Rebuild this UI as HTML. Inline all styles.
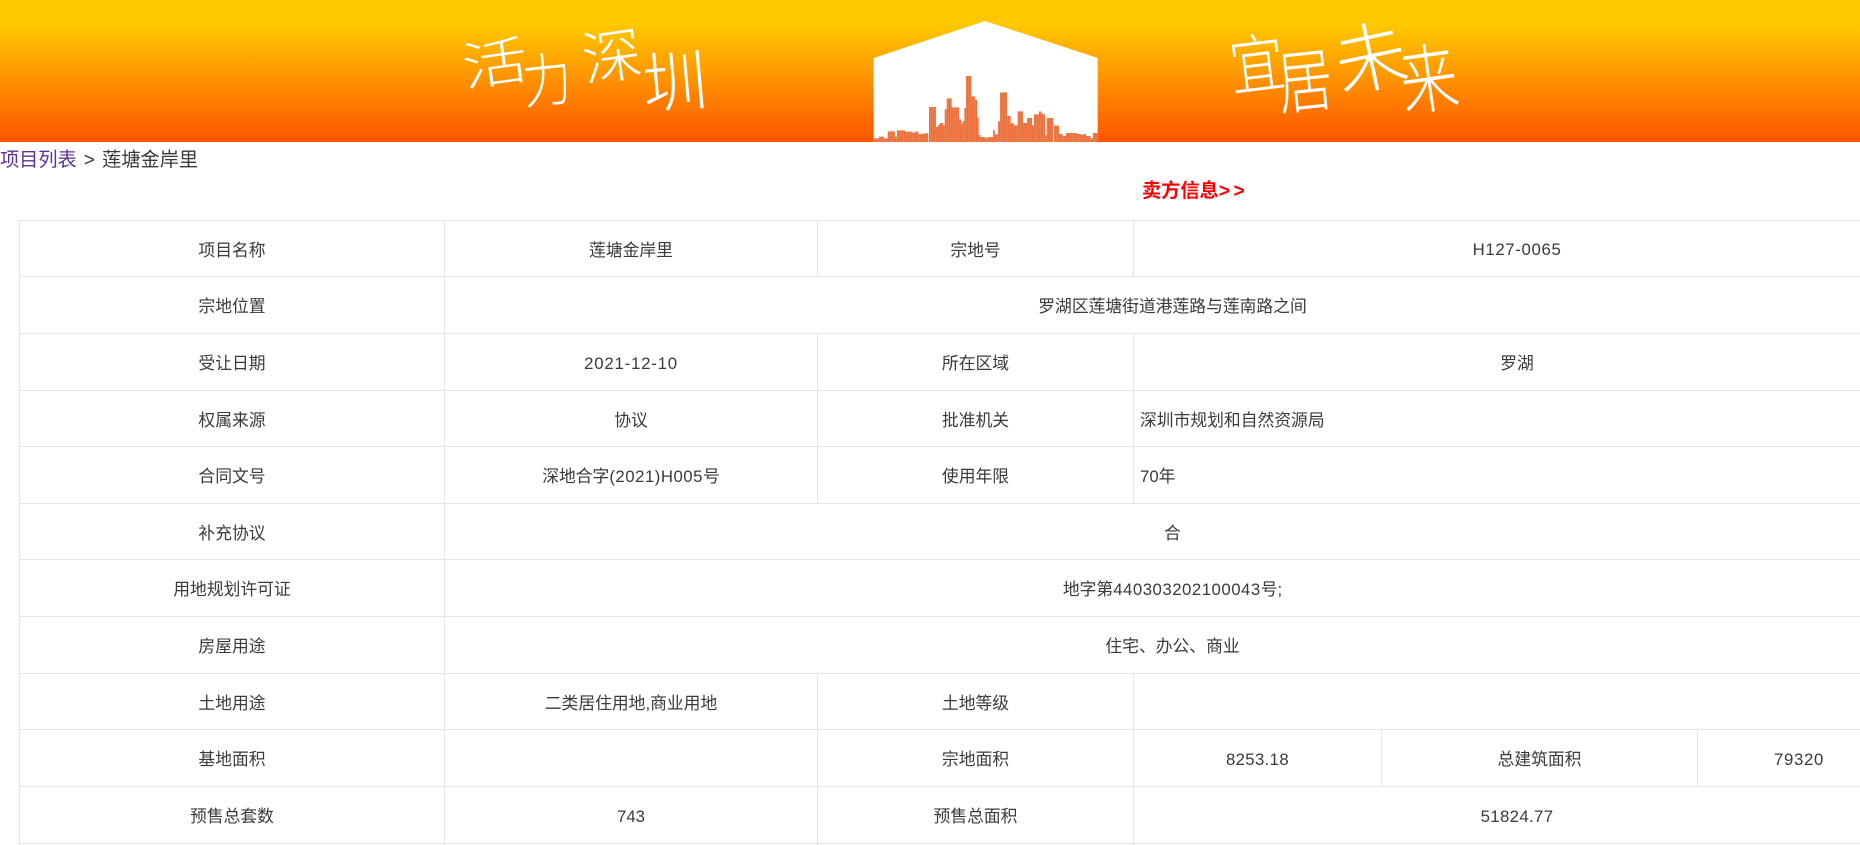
<!DOCTYPE html>
<html lang="zh-CN">
<head>
<meta charset="utf-8">
<title>莲塘金岸里</title>
<style>
html,body{margin:0;padding:0;background:#fff;width:1860px;height:845px;overflow:hidden}
body{position:relative;font-family:"Liberation Sans","Noto Sans CJK SC",sans-serif;color:#3a3a3a}
.banner{position:absolute;left:0;top:0;width:1860px;height:142px;background:linear-gradient(#ffc800 0,#ffc800 17%,#ff5500 100%)}
.banner svg{display:block}
.crumb{position:absolute;left:0;top:147px;font-size:19.2px;line-height:27px;white-space:nowrap;color:#3a3a3a}
.crumb a{color:#5f2f9a;text-decoration:none}
.crumb i{font-style:normal;margin:0 2px 0 1.5px}
.sell{position:absolute;left:1142px;top:178px;font-size:19.2px;line-height:28px;font-weight:bold;color:#f00;white-space:nowrap}
.sell span{letter-spacing:3.5px}
.wrap{position:absolute;left:19px;top:220px;width:1841px;height:625px;overflow:hidden}
table{width:1881px;table-layout:fixed;border-collapse:separate;border-spacing:0;font-size:16.8px}
td{box-sizing:border-box;border-top:1px solid #e5e5e5;border-left:1px solid #e5e5e5;text-align:center;vertical-align:middle;padding:0;overflow:hidden;white-space:nowrap}
td.l{text-align:left;padding-left:6px}
td.n{padding-top:3px}
tr.end td{height:2px;line-height:0;font-size:0}
.s8{letter-spacing:.8px}.s7{letter-spacing:.65px}.s3{letter-spacing:.35px}.s5{letter-spacing:.5px}
</style>
</head>
<body>
<div class="banner">
<svg width="1860" height="142" viewBox="0 0 1860 142" xmlns="http://www.w3.org/2000/svg">
<defs>
<pattern id="st" width="5.4" height="10" patternUnits="userSpaceOnUse"><rect width="5.4" height="10" fill="#ef8252"/><rect width="1.8" height="10" fill="#e9602a"/></pattern>
</defs>
<g fill="#fff" font-family="'Noto Sans CJK SC',sans-serif" font-size="60" font-weight="300" text-anchor="middle">
<text transform="translate(495 64) rotate(-8) scale(1.1 .87)" y="21">活</text>
<text transform="translate(547 81) rotate(-6) scale(.82 .97)" y="21">力</text>
<text transform="translate(612 57) rotate(-8) scale(1 .98)" y="21">深</text>
<text transform="translate(675 83) rotate(-5) scale(1.08 1.12)" y="21">圳</text>
<text transform="translate(1257 65) rotate(-7) scale(.92 1.07)" y="21">宜</text>
<text transform="translate(1305 82) rotate(-6) scale(.92 1.16)" y="21">居</text>
<text transform="translate(1371 59) rotate(-12) scale(1.2 1.25)" y="21">未</text>
<text transform="translate(1429 80) rotate(-8) scale(.96 1.25)" y="21">来</text>
</g>
<svg x="850" y="0" width="280" height="142" viewBox="0 0 840 426">
<path d="M71 174L405 63L743 174V426H71Z" fill="#fff"/>
<path fill="url(#st)" d="M72 426V415H87V410H102V415H113V394H135V410H141V391H165V395H188V398H195V395H205V402H220V400H235V426H237V321H258V381H264V375H269V369H279V376H284V328H290V295H305V322H327V358H333V370H338V363H343V324H348V228H364V289H375V300H381V352H386V405H391V411H407V415H413V411H429V390H434V403H444V364H450V277H471V348H482V370H492V376H503V334H519V369H531V354H546V376H552V343H567V334H573V340H579V344H585V406H590V354H610V426H612V377H627V402H638V408H648V399H680V402H695V405H700V402H708V408H722V415H729V399H743V426Z"/>
</svg>
</svg>
</div>
<div class="crumb"><a>项目列表</a> <i>&gt;</i> 莲塘金岸里</div>
<div class="sell">卖方信息<span>&gt;&gt;</span></div>
<div class="wrap">
<table>
<colgroup><col style="width:425px"><col style="width:373px"><col style="width:316px"><col style="width:248px"><col style="width:316px"><col style="width:203px"></colgroup>
<tr style="height:56px"><td>项目名称</td><td>莲塘金岸里</td><td>宗地号</td><td colspan="3" class="n s7">H127-0065</td></tr>
<tr style="height:57px"><td>宗地位置</td><td colspan="5">罗湖区莲塘街道港莲路与莲南路之间</td></tr>
<tr style="height:57px"><td>受让日期</td><td class="n s8">2021-12-10</td><td>所在区域</td><td colspan="3">罗湖</td></tr>
<tr style="height:56px"><td>权属来源</td><td>协议</td><td>批准机关</td><td colspan="3" class="l">深圳市规划和自然资源局</td></tr>
<tr style="height:57px"><td>合同文号</td><td><span>深地合字</span><span class="s5">(2021)H005</span><span>号</span></td><td>使用年限</td><td colspan="3" class="l">70年</td></tr>
<tr style="height:56px"><td>补充协议</td><td colspan="5">合</td></tr>
<tr style="height:57px"><td>用地规划许可证</td><td colspan="5">地字第<span class="s5">440303202100043</span>号;</td></tr>
<tr style="height:57px"><td>房屋用途</td><td colspan="5">住宅、办公、商业</td></tr>
<tr style="height:56px"><td>土地用途</td><td>二类居住用地,商业用地</td><td>土地等级</td><td colspan="3"></td></tr>
<tr style="height:57px"><td>基地面积</td><td></td><td>宗地面积</td><td class="n s3">8253.18</td><td>总建筑面积</td><td class="n s7">79320</td></tr>
<tr style="height:57px"><td>预售总套数</td><td class="n">743</td><td>预售总面积</td><td colspan="3" class="n s3">51824.77</td></tr>
<tr class="end"><td></td><td></td><td></td><td colspan="3"></td></tr>
</table>
</div>
</body>
</html>
